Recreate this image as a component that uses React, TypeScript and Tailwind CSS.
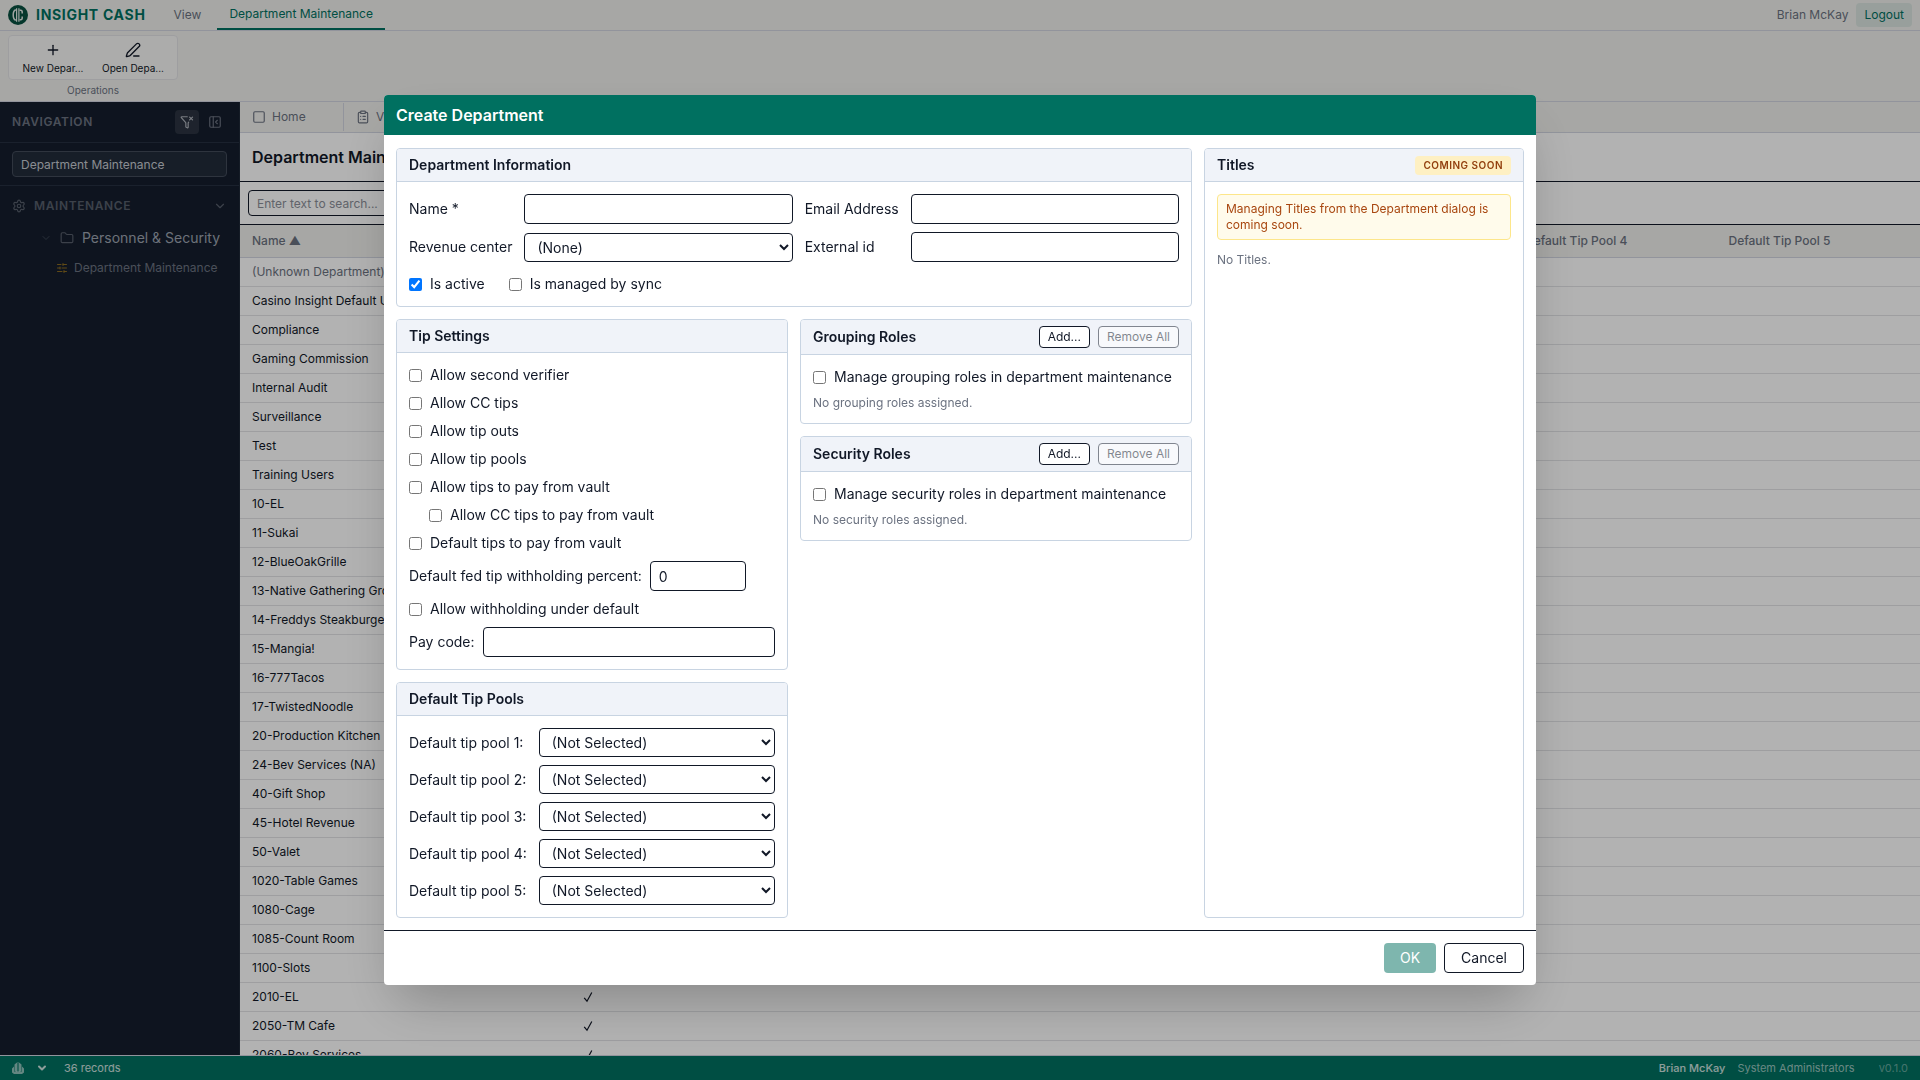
import React from "react";
import {
  Square, ClipboardList, PanelLeftClose, Settings, ChevronDown, Folder, SlidersHorizontal, Plus, PenLine, FunnelX,
} from "lucide-react";

const COLUMNS = ["Active", "Revenue Center", "Default Tip Pool 1", "Default Tip Pool 2", "Default Tip Pool 3", "Default Tip Pool 4", "Default Tip Pool 5"];

const DEPARTMENTS = [
  "(Unknown Department)", "Casino Insight Default Unit", "Compliance", "Gaming Commission", "Internal Audit",
  "Surveillance", "Test", "Training Users", "10-EL", "11-Sukai", "12-BlueOakGrille", "13-Native Gathering Grounds",
  "14-Freddys Steakburgers", "15-Mangia!", "16-777Tacos", "17-TwistedNoodle", "20-Production Kitchen",
  "24-Bev Services (NA)", "40-Gift Shop", "45-Hotel Revenue", "50-Valet", "1020-Table Games", "1080-Cage",
  "1085-Count Room", "1100-Slots", "2010-EL", "2050-TM Cafe", "2060-Bev Services",
];

const field = "h-[30px] w-full min-w-0 rounded border border-[#111827] bg-white px-2 text-sm outline-none";
const dropdown = "h-[29px] w-full min-w-0 rounded border border-[#111827] bg-white px-2 text-sm outline-none";

function Logo() {
  return (
    <svg viewBox="0 0 20 20" className="size-5 shrink-0">
      <circle cx="10" cy="10" r="10" fill="#08503f" />
      <path d="M7.800 4.800C5.800 5.500 5.200 7.200 5.200 10s.6 4.500 2.600 5.200" fill="none" stroke="#e4ebe8" strokeWidth="1.500" />
      <path d="M8.600 3.200v13.600M10.900 3.200v13.600" stroke="#e4ebe8" strokeWidth="1.200" />
      <path d="M11.500 5.200h1.200c1 0 1.500.7 1.500 2v1.200M11.500 14.800h1.200c1 0 1.500-.7 1.500-2v-1.200" fill="none" stroke="#e4ebe8" strokeWidth="1.500" />
    </svg>
  );
}

function CheckMark() {
  return (
    <svg viewBox="0 0 10 12" className="mx-auto h-3 w-2.5" fill="none" stroke="currentColor">
      <path d="M1.200 6.800 4 10.200 8.800 1.500" strokeWidth="1.200" />
    </svg>
  );
}

/* ── shared pieces ── */

function Panel({ title, action, className = "", children }: {
  title: string; action?: React.ReactNode; className?: string; children: React.ReactNode;
}) {
  return (
    <section className={`overflow-hidden rounded border border-[#c8d4e2] ${className}`}>
      <header className="flex items-center justify-between border-b border-[#c8d4e2] bg-[#f0f3f9] px-3 py-1.5">
        <h3 className="text-sm font-semibold">{title}</h3>
        {action}
      </header>
      <div className="p-3">{children}</div>
    </section>
  );
}

function Check({ label, checked, className = "" }: { label: string; checked?: boolean; className?: string }) {
  return (
    <label className={`flex items-center gap-2 text-sm ${className}`}>
      <input type="checkbox" defaultChecked={checked} className="size-[13px]" />
      {label}
    </label>
  );
}

function RolesPanel({ kind }: { kind: string }) {
  return (
    <Panel
      title={`${kind} Roles`}
      action={
        <div className="flex gap-2 text-xs">
          <button className="h-[22px] rounded border border-[#111827] bg-white px-2">Add...</button>
          <button disabled className="h-[22px] rounded border border-[#111827] bg-white px-2 opacity-50">Remove All</button>
        </div>
      }
    >
      <Check label={`Manage ${kind.toLowerCase()} roles in department maintenance`} />
      <p className="mt-2 text-xs text-[#6b7280]">No {kind.toLowerCase()} roles assigned.</p>
    </Panel>
  );
}

/* ── page behind the dialog ── */

function TopBar() {
  return (
    <header className="flex h-[31px] shrink-0 items-center border-b border-[#d1d5e0] pl-2 pr-2">
      <Logo />
      <span className="ml-2 text-sm font-bold tracking-wider text-[#007060]">INSIGHT CASH</span>
      <nav className="ml-4 flex h-full text-xs text-[#6b7280]">
        <a href="#view" className="flex items-center px-3">View</a>
        <a href="#departments" className="ml-1 flex items-center border-b-2 border-[#007060] px-3 text-[#007060]">Department Maintenance</a>
      </nav>
      <span className="ml-auto text-xs text-[#6b7280]">Brian McKay</span>
      <button className="ml-2 h-6 rounded bg-[#dae4e0] px-2 text-xs text-[#007060]">Logout</button>
    </header>
  );
}

function Ribbon() {
  return (
    <div className="flex h-[71px] shrink-0 border-b border-[#d1d5e0] px-2 pt-1">
      <div className="flex flex-col items-center">
        <div className="flex h-[45px] rounded border border-[#e2e3e6] bg-[#f7f7f5] px-1 text-[10px] leading-3">
          <button className="flex w-20 flex-col items-center justify-center gap-1"><Plus size={16} strokeWidth={2} />New Depar...</button>
          <button className="flex w-20 flex-col items-center justify-center gap-1"><PenLine size={16} strokeWidth={2} />Open Depa...</button>
        </div>
        <span className="mt-1 text-[10px] leading-3 text-[#6b7280]">Operations</span>
      </div>
    </div>
  );
}

function Sidebar() {
  return (
    <aside className="w-60 shrink-0 border-r border-[#1f2937] bg-[#151e2d] text-[#6b7280]">
      <div className="flex h-[41px] items-center border-b border-[#263041] px-3">
        <span className="text-xs font-semibold tracking-wider">NAVIGATION</span>
        <button aria-label="Clear filter" className="ml-auto flex size-6 items-center justify-center rounded bg-[#2b3341] text-[#b0b4bc]"><FunnelX size={14} /></button>
        <button aria-label="Collapse" className="ml-1 flex size-6 items-center justify-center"><PanelLeftClose size={14} /></button>
      </div>
      <div className="border-b border-[#263041] px-3 py-2">
        <input aria-label="Filter navigation" defaultValue="Department Maintenance" className="block h-[26px] w-full rounded border border-[#424b5a] bg-[#212b3a] px-2 text-xs text-[#c5c9d0]" />
      </div>
      <div className="flex h-10 items-center gap-2 px-3 text-xs font-semibold tracking-wider text-[#565e6b]">
        <Settings size={14} />
        MAINTENANCE
        <ChevronDown size={14} className="ml-auto" />
      </div>
      <div className="flex h-6 items-center pl-10 text-sm text-[#9ca3af]">
        <ChevronDown size={12} className="text-[#3b4452]" />
        <Folder size={14} className="ml-2 mr-2 text-[#565e6b]" />
        Personnel &amp; Security
      </div>
      <a href="#departments" className="mt-1 flex h-7 items-center gap-1.5 pl-14 text-xs">
        <SlidersHorizontal size={12} className="text-[#8a6a20]" />
        Department Maintenance
      </a>
    </aside>
  );
}

function DepartmentGrid() {
  return (
    <table className="w-full table-fixed text-left text-xs">
      <colgroup>
        <col className="w-[237px]" />
        <col className="w-[222px]" />
      </colgroup>
      <thead>
        <tr className="h-8 border-b border-[#d1d5e0] bg-[#f0f0ed] text-[#6b7280]">
          <th className="px-3 font-medium">Name ▲</th>
          {COLUMNS.map((column) => <th key={column} className="px-3 font-medium">{column}</th>)}
        </tr>
      </thead>
      <tbody>
        {DEPARTMENTS.map((name, i) => (
          <tr key={name} className="h-[29px] border-b border-[#e2e3e6]">
            <td className={i === 0 ? "truncate px-3 text-[#6b7280]" : "truncate px-3"}>{name}</td>
            <td><CheckMark /></td>
            <td colSpan={6} />
          </tr>
        ))}
      </tbody>
    </table>
  );
}

function StatusBar() {
  return (
    <footer className="flex h-[25px] shrink-0 items-center border-t border-[#d1d5e0] bg-[#007060] px-3 text-[11px] text-white/80">
      <svg viewBox="0 0 12 12" className="size-3" fill="currentColor">
        <path d="M2.500 2.500 5 .5v9.500l-2.500-1zM7 .5l2.500 2V9L7 10z" opacity=".7" />
        <path d="M5.400 0h1.200v10H5.400z" opacity=".5" />
        <path d="M0 6.500 2 4.500v5h8v-5l2 2v4L10 12H2L0 10.500z" opacity=".7" />
      </svg>
      <ChevronDown size={12} strokeWidth={4} className="ml-3" />
      <span className="ml-4">36 records</span>
      <span className="ml-auto font-medium">Brian McKay</span>
      <span className="ml-3 text-white/60">System Administrators</span>
      <span className="ml-6 text-white/40">v0.1.0</span>
    </footer>
  );
}

/* ── dialog ── */

function DepartmentInformation() {
  return (
    <Panel title="Department Information">
      <div className="grid grid-cols-[auto_1fr_auto_1fr] items-center gap-x-3 gap-y-2 text-sm">
        <label htmlFor="name">Name *</label>
        <input id="name" className={field} />
        <label htmlFor="email">Email Address</label>
        <input id="email" className={field} />
        <label htmlFor="revenue">Revenue center</label>
        <select id="revenue" className={dropdown}><option>(None)</option></select>
        <label htmlFor="external">External id</label>
        <input id="external" className={field} />
      </div>
      <div className="mt-3 flex gap-6">
        <Check label="Is active" checked />
        <Check label="Is managed by sync" />
      </div>
    </Panel>
  );
}

function TipSettings() {
  return (
    <Panel title="Tip Settings">
      <div className="flex flex-col gap-2">
        <Check label="Allow second verifier" />
        <Check label="Allow CC tips" />
        <Check label="Allow tip outs" />
        <Check label="Allow tip pools" />
        <Check label="Allow tips to pay from vault" />
        <Check label="Allow CC tips to pay from vault" className="pl-5" />
        <Check label="Default tips to pay from vault" />
        <div className="flex items-center gap-2 text-sm">
          <label htmlFor="withholding">Default fed tip withholding percent:</label>
          <div className="w-24"><input id="withholding" defaultValue="0" className={field} /></div>
        </div>
        <Check label="Allow withholding under default" />
        <div className="flex items-center gap-2 text-sm">
          <label htmlFor="paycode" className="shrink-0">Pay code:</label>
          <input id="paycode" className={field} />
        </div>
      </div>
    </Panel>
  );
}

function TipPools() {
  return (
    <Panel title="Default Tip Pools">
      <div className="grid grid-cols-[auto_1fr] items-center gap-x-3 gap-y-2 text-sm">
        {[1, 2, 3, 4, 5].map((n) => (
          <React.Fragment key={n}>
            <label htmlFor={`pool-${n}`}>Default tip pool {n}:</label>
            <select id={`pool-${n}`} className={dropdown}><option>(Not Selected)</option></select>
          </React.Fragment>
        ))}
      </div>
    </Panel>
  );
}

function CreateDepartmentDialog() {
  return (
    <div role="dialog" aria-label="Create Department" className="w-3/5 overflow-hidden rounded bg-white shadow-2xl">
      <h2 className="bg-[#007060] px-3 py-2 text-base font-semibold text-white">Create Department</h2>
      <div className="grid grid-cols-[1fr_320px] gap-3 px-3 pb-3 pt-[13px]">
        <div className="flex flex-col gap-3">
          <DepartmentInformation />
          <div className="grid grid-cols-2 items-start gap-3">
            <div className="flex flex-col gap-3">
              <TipSettings />
              <TipPools />
            </div>
            <div className="flex flex-col gap-3">
              <RolesPanel kind="Grouping" />
              <RolesPanel kind="Security" />
            </div>
          </div>
        </div>
        <Panel
          title="Titles"
          action={<span className="rounded bg-[#fef0c3] px-2 text-[10px] font-semibold leading-[19px] tracking-wider text-[#92400e]">COMING SOON</span>}
        >
          <p className="rounded border border-[#fde68a] bg-[#fffbeb] px-2 py-1.5 text-xs text-[#a8460f]">
            Managing Titles from the Department dialog is coming soon.
          </p>
          <p className="mt-3 text-xs text-[#6b7280]">No Titles.</p>
        </Panel>
      </div>
      <footer className="flex justify-end gap-2 border-t border-[#111827] p-3 text-sm">
        <button disabled className="h-[30px] rounded bg-[#007060] px-4 text-white opacity-50">OK</button>
        <button className="h-[30px] rounded border border-[#111827] px-4">Cancel</button>
      </footer>
    </div>
  );
}

export default function App() {
  return (
    <div className="font-['Inter',sans-serif] text-[#111827]">
      <div className="flex h-screen flex-col bg-[#f0f0ed]">
        <TopBar />
        <Ribbon />
        <div className="flex min-h-0 flex-1">
          <Sidebar />
          <main className="flex min-w-0 flex-1 flex-col overflow-hidden bg-white">
            <div className="flex h-[31px] shrink-0 items-center border-b border-[#d1d5e0] bg-[#f0f0ed] text-xs text-[#6b7280]">
              <a href="#home" className="flex w-[104px] items-center gap-1.5 border-r border-[#d1d5e0] px-3 py-1.5"><Square size={14} />Home</a>
              <a href="#departments" className="flex items-center gap-1.5 px-3"><ClipboardList size={14} />View Departments</a>
            </div>
            <h1 className="flex h-[49px] shrink-0 items-center border-b border-[#111827] px-3 text-base font-semibold">Department Maintenance</h1>
            <div className="shrink-0 border-b border-[#111827] p-2">
              <input aria-label="Search" placeholder="Enter text to search..." className="block h-[26px] w-[300px] rounded border border-[#111827] px-2 text-xs placeholder:text-[#8b8f98]" />
            </div>
            <div className="min-h-0 flex-1 overflow-hidden">
              <DepartmentGrid />
            </div>
          </main>
        </div>
        <StatusBar />
      </div>
      <div className="fixed inset-0 flex items-center justify-center bg-black/30">
        <CreateDepartmentDialog />
      </div>
    </div>
  );
}
